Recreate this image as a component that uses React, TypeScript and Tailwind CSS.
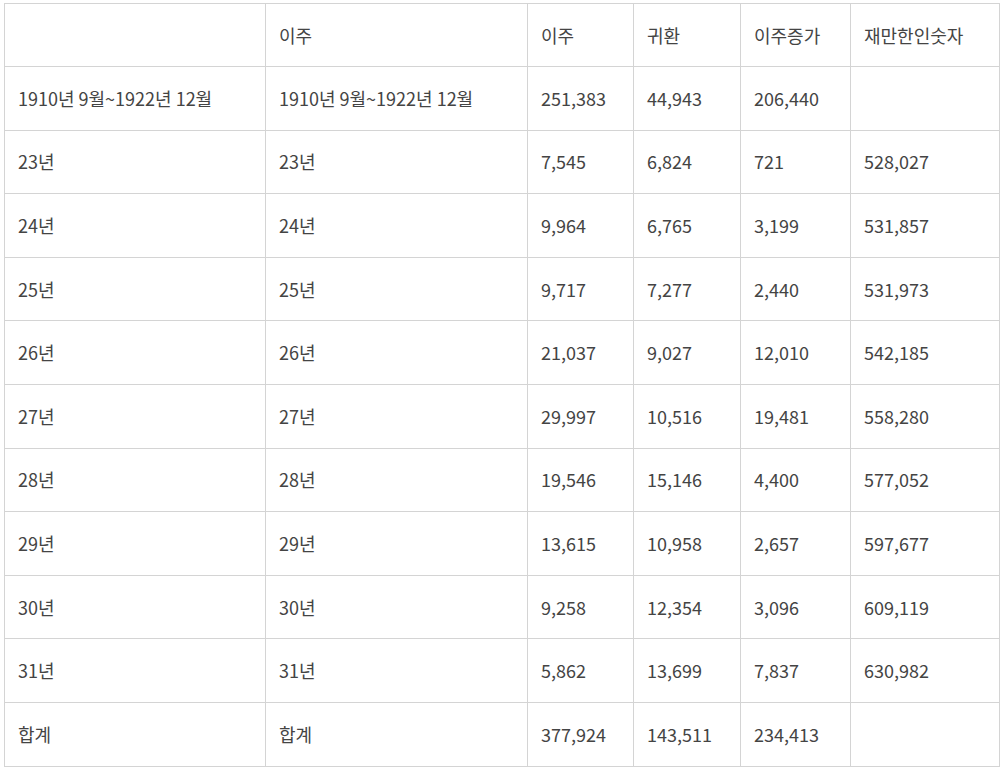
import React from 'react';

const header = ['', '이주', '이주', '귀환', '이주증가', '재만한인숫자'];

const rows: string[][] = [
  ['1910년 9월~1922년 12월', '1910년 9월~1922년 12월', '251,383', '44,943', '206,440', ''],
  ['23년', '23년', '7,545', '6,824', '721', '528,027'],
  ['24년', '24년', '9,964', '6,765', '3,199', '531,857'],
  ['25년', '25년', '9,717', '7,277', '2,440', '531,973'],
  ['26년', '26년', '21,037', '9,027', '12,010', '542,185'],
  ['27년', '27년', '29,997', '10,516', '19,481', '558,280'],
  ['28년', '28년', '19,546', '15,146', '4,400', '577,052'],
  ['29년', '29년', '13,615', '10,958', '2,657', '597,677'],
  ['30년', '30년', '9,258', '12,354', '3,096', '609,119'],
  ['31년', '31년', '5,862', '13,699', '7,837', '630,982'],
  ['합계', '합계', '377,924', '143,511', '234,413', ''],
];

const widths = ['w-[261px]', 'w-[262px]', 'w-[106px]', 'w-[107px]', 'w-[110px]', 'w-[149px]'];

export default function App() {
  return (
    <div className="bg-white pl-[4px] pt-[3px] font-['Noto_Sans_CJK_KR','Noto_Sans',sans-serif] text-[18px] text-[#444]">
      <table className="border-collapse table-fixed w-[996px]">
        <colgroup>
          {widths.map((w, i) => (
            <col key={i} className={w} />
          ))}
        </colgroup>
        <thead>
          <tr className="h-[63px]">
            {header.map((h, i) => (
              <th key={i} className="border border-[#d4d4d4] pl-[13px] text-left font-normal align-middle">
                {h}
              </th>
            ))}
          </tr>
        </thead>
        <tbody>
          {rows.map((r, ri) => (
            <tr key={ri} className="h-[63.6px]">
              {r.map((c, ci) => (
                <td key={ci} className="border border-[#d4d4d4] pl-[13px] align-middle whitespace-nowrap">
                  {c}
                </td>
              ))}
            </tr>
          ))}
        </tbody>
      </table>
    </div>
  );
}
